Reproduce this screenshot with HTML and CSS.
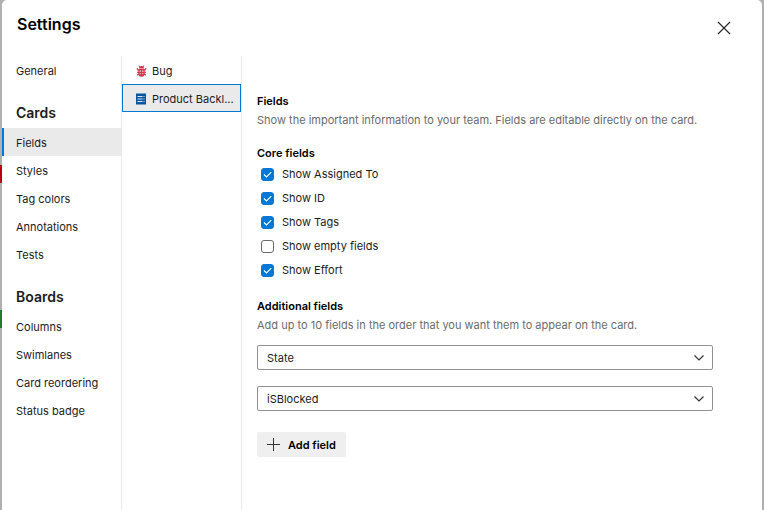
FILE: index.html
```html
<!DOCTYPE html>
<html lang="en">
<head>
<meta charset="utf-8">
<title>Settings</title>
<link rel="stylesheet" href="styles.css">
</head>
<body>
<div class="board-edge" aria-hidden="true"><span class="edge-mark edge-red"></span><span class="edge-mark edge-green"></span></div>
<main class="dialog" role="dialog" aria-labelledby="title">
  <header class="header">
    <h1 id="title">Settings</h1>
    <button class="close" type="button" aria-label="Close">
      <svg width="14" height="14" viewBox="0 0 14 14"><path d="M1 1l12 12M13 1L1 13" fill="none" stroke="#222" stroke-width="1.1"/></svg>
    </button>
  </header>
  <div class="body">
    <nav class="nav">
      <a class="item" href="#general">General</a>
      <h2>Cards</h2>
      <a class="item selected" href="#fields" aria-current="page">Fields</a>
      <a class="item" href="#styles">Styles</a>
      <a class="item" href="#tags">Tag colors</a>
      <a class="item" href="#annotations">Annotations</a>
      <a class="item" href="#tests">Tests</a>
      <h2>Boards</h2>
      <a class="item" href="#columns">Columns</a>
      <a class="item" href="#swimlanes">Swimlanes</a>
      <a class="item" href="#reordering">Card reordering</a>
      <a class="item" href="#badge">Status badge</a>
    </nav>
    <nav class="types">
      <a class="type" href="#bug">
        <svg width="11" height="12" viewBox="0 0 11 12"><path d="M3 .5l1 1.500M8 .5L7 2M1.300 3v2h2M9.700 3v2h-2M1 7.300h2M10 7.300H8M1.500 10.500V9.300h2M9.500 10.500V9.300h-2" fill="none" stroke="#d4334a" stroke-width="1"/><path d="M3 3.500a2.500 2.500 0 0 1 5 0zM2.300 4h6.400v4.500a3.200 3.200 0 0 1-6.400 0z" fill="#d4334a"/><path d="M3.600 5.500h1.200v1.200H3.600zM6.200 5.500h1.200v1.200H6.200zM3.800 8.200h1v1h-1zM6.200 8.200h1v1h-1z" fill="#fff"/></svg>
        <span>Bug</span>
      </a>
      <a class="type active" href="#pbi" aria-current="true">
        <svg width="11" height="12" viewBox="0 0 11 12"><path d="M0 .5h10v11H0z" fill="#0b559f"/><path d="M1.500 3.500h5M1.500 6h5M1.500 8.500h5M7.500 3.500h1M7.500 6h1M7.500 8.500h1" stroke="#dbe8f4" stroke-width="1"/></svg>
        <span>Product Backl...</span>
      </a>
    </nav>
    <form class="content">
      <h3>Fields</h3>
      <p>Show the important information to your team. Fields are editable directly on the card.</p>
      <fieldset class="checks">
        <legend>Core fields</legend>
        <label><input type="checkbox" checked><span>Show Assigned To</span></label>
        <label><input type="checkbox" checked><span>Show ID</span></label>
        <label><input type="checkbox" checked><span>Show Tags</span></label>
        <label><input type="checkbox"><span>Show empty fields</span></label>
        <label><input type="checkbox" checked><span>Show Effort</span></label>
      </fieldset>
      <h3>Additional fields</h3>
      <p>Add up to 10 fields in the order that you want them to appear on the card.</p>
      <div class="select">
        <select aria-label="Additional field 1"><option>State</option></select>
        <svg width="12" height="8" viewBox="0 0 12 8"><path d="M1.500 1.500L6 6l4.500-4.500" fill="none" stroke="#333" stroke-width="1.200"/></svg>
      </div>
      <div class="select">
        <select aria-label="Additional field 2"><option>iSBlocked</option></select>
        <svg width="12" height="8" viewBox="0 0 12 8"><path d="M1.500 1.500L6 6l4.500-4.500" fill="none" stroke="#333" stroke-width="1.200"/></svg>
      </div>
      <button class="add" type="button">
        <svg width="13" height="13" viewBox="0 0 13 13"><path d="M0 6.500h13M6.500 0v13" stroke="#333" stroke-width="1"/></svg>
        <span>Add field</span>
      </button>
    </form>
  </div>
</main>
</body>
</html>
```
FILE: styles.css
```css
* {
  box-sizing: border-box;
}

body {
  position: relative;
  margin: 0;
  padding: 0 2px;
  min-height: 100vh;
  display: flex;
  background: #b0b0b0;
  color: #1c1c1c;
  font: 11px/16px Inter, "Liberation Sans", sans-serif;
}

/* Slivers of the board cards visible beside the dialog */
.board-edge {
  position: absolute;
  top: 0;
  left: 0;
  width: 2px;
  height: 100%;
}

.edge-mark {
  position: absolute;
  left: 0;
  width: 2px;
  height: 18px;
}

.edge-red {
  top: 165px;
  background: #b80012;
}

.edge-green {
  top: 310px;
  background: #1f7a2c;
}

.dialog {
  flex: 1;
  min-width: 0;
  display: flex;
  flex-direction: column;
  background: #fff;
  border-radius: 5px 5px 0 0;
}

h1,
h2,
h3,
p {
  margin: 0;
}

.header {
  display: flex;
  align-items: center;
  justify-content: space-between;
  height: 56px;
  padding: 0 23px 0 15px;
}

h1 {
  padding-bottom: 8px;
  font-size: 16px;
  line-height: 24px;
  font-weight: 600;
  color: #000;
}

.close {
  display: flex;
  padding: 8px;
  border: 0;
  background: none;
}

.body {
  flex: 1;
  display: flex;
}

.nav,
.types {
  flex: none;
  width: 120px;
  border-right: 1px solid #eaeaea;
}

.item,
.type {
  display: flex;
  align-items: center;
  height: 28px;
  color: inherit;
  text-decoration: none;
}

.item {
  padding: 2px 0 0 14px;
}

.selected {
  padding-left: 12px;
  border-left: 2px solid #0078d4;
  background: #eaeaea;
}

h2 {
  padding: 14px 0 0 14px;
  font-size: 14px;
  line-height: 30px;
  font-weight: 600;
}

.type {
  gap: 5px;
  padding: 2px 0 0 13px;
  border: 1px solid transparent;
}

.type svg {
  flex: none;
}

.type span {
  white-space: nowrap;
}

.active {
  border-color: #0078d4;
  background: #eaeaea;
}

.content {
  flex: 1;
  min-width: 0;
  padding: 36px 49px 0 15px;
}

h3,
legend {
  padding: 0;
  font-size: 11px;
  line-height: 18px;
  font-weight: 600;
  color: #000;
}

p {
  padding: 2px 0;
  color: #6b6b6b;
}

.checks {
  margin: 14px 0 15px;
  padding: 0;
  border: 0;
}

.checks label {
  display: flex;
  align-items: center;
  gap: 8px;
  height: 24px;
  padding-left: 4px;
}

.checks input {
  appearance: none;
  width: 13px;
  height: 13px;
  margin: 0;
  border: 1px solid #6b6b6b;
  border-radius: 3px;
  background: #fff;
}

.checks input:checked {
  border-color: #0078d4;
  background: #0078d4 url("data:image/svg+xml,%3Csvg xmlns='http://www.w3.org/2000/svg' viewBox='0 0 11 11'%3E%3Cpath d='M2 5.500l2.500 2.500L9.300 3.200' fill='none' stroke='white' stroke-width='1.100'/%3E%3C/svg%3E");
}

.select {
  position: relative;
  margin: 10px 0 16px;
}

.select + .select {
  margin-top: 0;
}

.select select {
  appearance: none;
  display: block;
  width: 100%;
  height: 25px;
  padding: 0 9px;
  border: 1px solid #929292;
  border-radius: 2px;
  background: #fff;
  color: inherit;
  font: inherit;
}

.select svg {
  position: absolute;
  top: 9px;
  right: 8px;
  pointer-events: none;
}

.add {
  display: flex;
  align-items: center;
  gap: 8px;
  height: 25px;
  margin-top: 21px;
  padding: 0 10px;
  border: 0;
  border-radius: 2px;
  background: #efefef;
  color: #000;
  font: inherit;
  font-weight: 600;
}
```
